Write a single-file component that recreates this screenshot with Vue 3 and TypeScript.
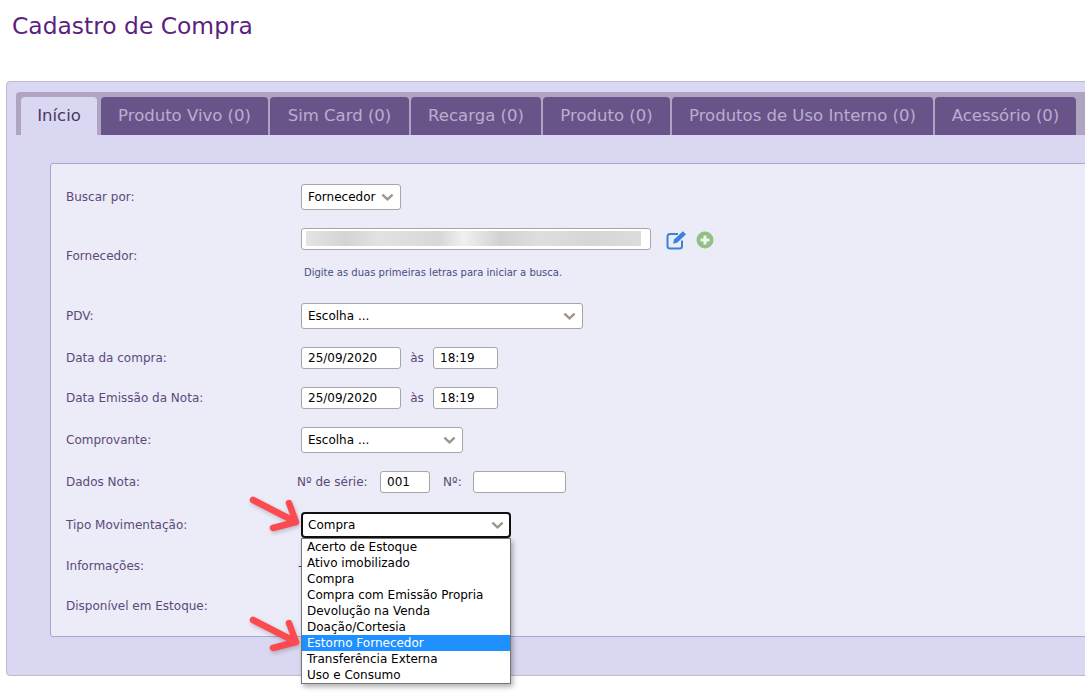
<template>
  <div class="page">
    <h1 class="title">Cadastro de Compra</h1>

    <div class="panel">
      <ul class="tabs">
        <li v-for="(tab, i) in tabs" :key="tab" class="tab" :class="{ active: i === 0 }">{{ tab }}</li>
      </ul>

      <div class="card">
        <div class="row r-busca">
          <label>Buscar por:</label>
          <div class="sel w-forn"><span>Fornecedor</span><svg class="chev" viewBox="0 0 14 8"><path d="M1.500 1.500 7 6.500l5.500-5" /></svg></div>
        </div>

        <div class="row r-forn">
          <label>Fornecedor:</label>
          <div class="forn-col">
            <div class="forn-line">
              <div class="blur-input"><div class="blur-inner"></div></div>
              <svg class="ico-edit" viewBox="0 0 22 20">
                <path d="M16 10.500V16a2.500 2.500 0 0 1-2.500 2.500H4A2.500 2.500 0 0 1 1.500 16V6.500A2.500 2.500 0 0 1 4 4h8" fill="none" stroke="#3b82d8" stroke-width="2" />
                <path d="M8 9.500 16.800 1.200l3.200 3-8.800 8.500-4 1z" fill="#3b82d8" />
              </svg>
              <svg class="ico-plus" viewBox="0 0 18 18">
                <circle cx="9" cy="9" r="8.500" fill="#93bf85" />
                <path d="M9 4.500v9M4.500 9h9" stroke="#f2f4ee" stroke-width="3" />
              </svg>
            </div>
            <small class="hint">Digite as duas primeiras letras para iniciar a busca.</small>
          </div>
        </div>

        <div class="row r-pdv">
          <label>PDV:</label>
          <div class="sel w-pdv"><span>Escolha ...</span><svg class="chev" viewBox="0 0 14 8"><path d="M1.500 1.500 7 6.500l5.500-5" /></svg></div>
        </div>

        <div class="row r-data">
          <label>Data da compra:</label>
          <div class="inp w-date">25/09/2020</div>
          <span class="as">às</span>
          <div class="inp w-time">18:19</div>
        </div>

        <div class="row r-emis">
          <label>Data Emissão da Nota:</label>
          <div class="inp w-date">25/09/2020</div>
          <span class="as">às</span>
          <div class="inp w-time">18:19</div>
        </div>

        <div class="row r-comp">
          <label>Comprovante:</label>
          <div class="sel w-comp"><span>Escolha ...</span><svg class="chev" viewBox="0 0 14 8"><path d="M1.500 1.500 7 6.500l5.500-5" /></svg></div>
        </div>

        <div class="row r-nota">
          <label>Dados Nota:</label>
          <span class="serie">Nº de série:</span>
          <div class="inp w-serie">001</div>
          <span class="num">Nº:</span>
          <div class="inp w-num"></div>
        </div>

        <div class="row r-tipo">
          <label>Tipo Movimentação:</label>
          <div class="sel w-tipo focus"><span>Compra</span><svg class="chev" viewBox="0 0 14 8"><path d="M1.500 1.500 7 6.500l5.500-5" /></svg></div>
        </div>

        <div class="row r-info">
          <label>Informações:</label>
          <span class="dash">-</span>
        </div>

        <div class="row r-disp">
          <label>Disponível em Estoque:</label>
        </div>
      </div>
    </div>

    <ul class="dropdown">
      <li v-for="opt in options" :key="opt" :class="{ picked: opt === picked }">{{ opt }}</li>
    </ul>

    <svg class="arrows" viewBox="0 0 1085 693">
      <g fill="none" stroke="#fb4a50" stroke-width="6.500" stroke-linecap="round" stroke-linejoin="round">
        <path d="M253 500 296 522M273 528 296 522 289 503" />
        <path d="M253 620 296 642M273 648 296 642 289 623" />
      </g>
    </svg>
  </div>
</template>

<script setup lang="ts">
const tabs = [
  "Início",
  "Produto Vivo (0)",
  "Sim Card (0)",
  "Recarga (0)",
  "Produto (0)",
  "Produtos de Uso Interno (0)",
  "Acessório (0)",
];

const options = [
  "Acerto de Estoque",
  "Ativo imobilizado",
  "Compra",
  "Compra com Emissão Propria",
  "Devolução na Venda",
  "Doação/Cortesia",
  "Estorno Fornecedor",
  "Transferência Externa",
  "Uso e Consumo",
];
const picked = "Estorno Fornecedor";
</script>

<style>
html,
body {
  margin: 0;
  background: #fff;
}
</style>

<style scoped>
.page {
  position: relative;
  width: 1085px;
  height: 693px;
  overflow: hidden;
  font-family: "DejaVu Sans", Verdana, sans-serif;
  font-size: 12px;
  color: #5a4a78;
}

.title {
  margin: 0;
  padding: 11px 0 0 12px;
  height: 70px;
  box-sizing: border-box;
  font-size: 23.400px;
  line-height: 30px;
  font-weight: 400;
  color: #5b1f80;
}

.panel {
  margin: 11px 0 0 6px;
  width: 1120px;
  height: 595px;
  box-sizing: border-box;
  padding: 10px 10px 10px 9px;
  background: #dad7f2;
  border: 1px solid #bdbcc8;
  border-radius: 4px;
}

.tabs {
  display: flex;
  gap: 2px;
  margin: 0;
  padding: 5px 0 0 5px;
  height: 43px;
  box-sizing: border-box;
  list-style: none;
  background: #b0a4c3;
  border-radius: 4px 4px 0 0;
}

.tab {
  flex: none;
  height: 38px;
  box-sizing: border-box;
  text-align: center;
  font-size: 16.500px;
  line-height: 38px;
  white-space: nowrap;
  color: #b9aed0;
  background: #69548a;
  border-radius: 4px 4px 0 0;
}

.tab:nth-child(1) {
  width: 76px;
}

.tab:nth-child(2) {
  width: 167px;
}

.tab:nth-child(3) {
  width: 139px;
}

.tab:nth-child(4) {
  width: 130px;
}

.tab:nth-child(5) {
  width: 127px;
}

.tab:nth-child(6) {
  width: 261px;
}

.tab:nth-child(7) {
  width: 141px;
}

.tab.active {
  margin-right: 2px;
  color: #473a5c;
  background: #dad7f2;
}

.card {
  margin: 28px 0 0 34px;
  height: 474px;
  box-sizing: border-box;
  padding: 0 0 0 15px;
  background: #ecebf8;
  border: 1px solid #aaa8c8;
  border-radius: 3px;
}

.row {
  display: flex;
  align-items: center;
}

.row label {
  flex: 0 0 235px;
}

.r-busca {
  margin-top: 20px;
}

.r-forn {
  margin-top: 18px;
}

.r-pdv {
  margin-top: 20px;
}

.r-data {
  margin-top: 18px;
}

.r-emis {
  margin-top: 18px;
}

.r-comp {
  margin-top: 18px;
}

.r-nota {
  margin-top: 18px;
}

.r-tipo {
  margin-top: 19px;
}

.r-info {
  margin-top: 21px;
}

.r-disp {
  margin-top: 26px;
}

.sel,
.inp {
  box-sizing: border-box;
  color: #000;
  background: #fff;
  border: 1px solid #a6a6a6;
  border-radius: 3px;
}

.sel {
  display: flex;
  align-items: center;
  justify-content: space-between;
  height: 26px;
  padding: 0 6px;
}

.inp {
  height: 22px;
  line-height: 20px;
  padding: 0 6px;
}

.chev {
  width: 13px;
  height: 8px;
  fill: none;
  stroke: #a09488;
  stroke-width: 2.600;
}

.w-forn {
  width: 100px;
}

.w-pdv {
  width: 282px;
}

.w-comp {
  width: 162px;
}

.w-tipo {
  width: 210px;
}

.w-date {
  width: 100px;
}

.w-time {
  width: 65px;
}

.w-serie {
  width: 50px;
}

.w-num {
  width: 93px;
}

.sel.focus {
  border: 2px solid #111;
  border-radius: 4px;
  padding: 0 5px;
}

.as {
  width: 32px;
  text-align: center;
}

.serie {
  margin-left: -4px;
  width: 83px;
}

.num {
  margin-left: 13px;
  width: 30px;
}

.dash {
  margin-left: -3px;
  color: #3a2a5a;
}

.forn-col {
  display: flex;
  flex-direction: column;
}

.forn-line {
  display: flex;
  align-items: center;
}

.blur-input {
  width: 350px;
  height: 22px;
  box-sizing: border-box;
  padding: 2px 9px 3px 4px;
  background: #fff;
  border: 1px solid #a6a6a6;
  border-radius: 3px;
}

.blur-inner {
  height: 100%;
  background: linear-gradient(90deg, #e4e4e4, #d4d4d4 12%, #e2e2e2 22%, #d8d8d8 40%, #f0f0f0 47%, #d2d2d2 58%, #dedede 70%, #d6d6d6 85%, #dcdcdc 100%);
}

.ico-edit {
  width: 22px;
  height: 20px;
  margin: 2px 0 0 15px;
}

.ico-plus {
  width: 18px;
  height: 18px;
  margin: 2px 0 0 8px;
}

.hint {
  margin: 17px 0 4px 3px;
  font-size: 10px;
  line-height: 12px;
  color: #42507e;
}

.dropdown {
  position: absolute;
  left: 301px;
  top: 538px;
  width: 210px;
  margin: 0;
  padding: 0;
  box-sizing: border-box;
  list-style: none;
  background: #fff;
  border: 1px solid #767676;
  color: #000;
  box-shadow: 2px 3px 5px rgba(0, 0, 0, 0.3);
}

.dropdown li {
  height: 16px;
  line-height: 16px;
  padding-left: 5px;
  white-space: nowrap;
}

.dropdown li.picked {
  color: #fff;
  background: #1e90ff;
}

.arrows {
  position: absolute;
  left: 0;
  top: 0;
  width: 1085px;
  height: 693px;
  filter: drop-shadow(1px 2px 2px rgba(0, 0, 0, 0.2));
  pointer-events: none;
}
</style>
